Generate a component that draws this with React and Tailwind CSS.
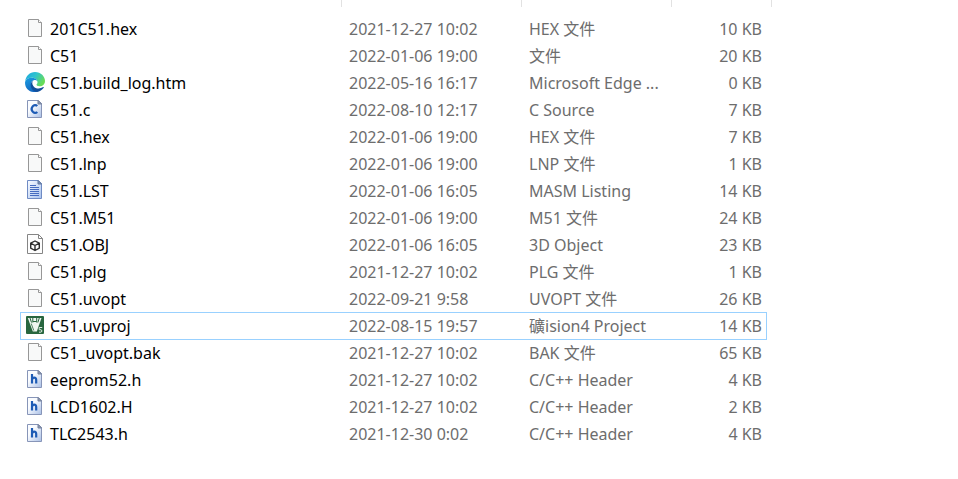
const files = [
  { name: '201C51.hex', date: '2021-12-27 10:02', type: 'HEX 文件', size: '10 KB', icon: 'blank' },
  { name: 'C51', date: '2022-01-06 19:00', type: '文件', size: '20 KB', icon: 'blank' },
  { name: 'C51.build_log.htm', date: '2022-05-16 16:17', type: 'Microsoft Edge ...', size: '0 KB', icon: 'edge' },
  { name: 'C51.c', date: '2022-08-10 12:17', type: 'C Source', size: '7 KB', icon: 'c' },
  { name: 'C51.hex', date: '2022-01-06 19:00', type: 'HEX 文件', size: '7 KB', icon: 'blank' },
  { name: 'C51.lnp', date: '2022-01-06 19:00', type: 'LNP 文件', size: '1 KB', icon: 'blank' },
  { name: 'C51.LST', date: '2022-01-06 16:05', type: 'MASM Listing', size: '14 KB', icon: 'listing' },
  { name: 'C51.M51', date: '2022-01-06 19:00', type: 'M51 文件', size: '24 KB', icon: 'blank' },
  { name: 'C51.OBJ', date: '2022-01-06 16:05', type: '3D Object', size: '23 KB', icon: 'object' },
  { name: 'C51.plg', date: '2021-12-27 10:02', type: 'PLG 文件', size: '1 KB', icon: 'blank' },
  { name: 'C51.uvopt', date: '2022-09-21 9:58', type: 'UVOPT 文件', size: '26 KB', icon: 'blank' },
  { name: 'C51.uvproj', date: '2022-08-15 19:57', type: '礦ision4 Project', size: '14 KB', icon: 'keil', focused: true },
  { name: 'C51_uvopt.bak', date: '2021-12-27 10:02', type: 'BAK 文件', size: '65 KB', icon: 'blank' },
  { name: 'eeprom52.h', date: '2021-12-27 10:02', type: 'C/C++ Header', size: '4 KB', icon: 'h' },
  { name: 'LCD1602.H', date: '2021-12-27 10:02', type: 'C/C++ Header', size: '2 KB', icon: 'h' },
  { name: 'TLC2543.h', date: '2021-12-30 0:02', type: 'C/C++ Header', size: '4 KB', icon: 'h' },
];

function BlankIcon() {
  return (
    <>
      <path d="M3.5 1.5h10l3 3v14h-13z" fill="#f8f9f9" stroke="#979797" />
      <path d="M13.5 1.5v3h3" fill="#fff" stroke="#979797" />
    </>
  );
}

function BluePage() {
  return (
    <>
      <defs>
        <linearGradient id="page" x1="0" y1="0" x2="1" y2="1">
          <stop offset="0.35" stopColor="#fafcff" />
          <stop offset="1" stopColor="#a9bfe6" />
        </linearGradient>
      </defs>
      <path d="M2.5 1.5h11l3 3v14h-14z" fill="url(#page)" stroke="#8795b8" />
      <path d="M13 1.5v3.5h3.5z" fill="#8e99b0" stroke="#75819c" />
    </>
  );
}

function CIcon() {
  return (
    <>
      <BluePage />
      <path d="M12.3 7A3.4 3.9 0 1 0 12.3 13" fill="none" stroke="#1d5bb5" strokeWidth="2.2" />
    </>
  );
}

function HIcon() {
  return (
    <>
      <BluePage />
      <path
        d="M7 5v9.5M7 11Q7.4 8.6 9.2 8.6 11.2 8.6 11.2 11V14.5"
        fill="none"
        stroke="#1d5bb5"
        strokeWidth="2.2"
      />
    </>
  );
}

function ListingIcon() {
  return (
    <>
      <defs>
        <linearGradient id="listing" x1="0" y1="0" x2="1" y2="1">
          <stop offset="0.1" stopColor="#f2f7ff" />
          <stop offset="1" stopColor="#a8c2ee" />
        </linearGradient>
      </defs>
      <path d="M2.5 .5h11l3 3v15h-14z" fill="url(#listing)" stroke="#6f8bc4" />
      <path d="M13 .5v3.5h3.5z" fill="#7d91b8" stroke="#62789f" />
      <path d="M5 5.5h6M5 7.5h9M5 9.5h9M5 11.5h9M5 13.5h9M5 15.5h9" stroke="#466cc0" />
    </>
  );
}

function ObjectIcon() {
  return (
    <>
      <path d="M2.5 .5h11l4 4v15h-15z" fill="#fdfdfd" stroke="#858585" />
      <path d="M13.5 .5v4h4" fill="none" stroke="#858585" />
      <path
        d="M10 7 14.3 9.2V14.2L10 16.5 5.7 14.2V9.2zM5.7 9.2l4.3 2.3 4.3-2.3M10 11.5v5"
        fill="none"
        stroke="#2d2d2d"
        strokeWidth="1.4"
        strokeLinejoin="round"
      />
    </>
  );
}

function EdgeIcon() {
  return (
    <>
      <defs>
        <linearGradient id="edge-top" x1="0" y1="0" x2="1" y2="0.5">
          <stop offset="0" stopColor="#1ba5df" />
          <stop offset="0.5" stopColor="#2fc3cf" />
          <stop offset="1" stopColor="#68dc58" />
        </linearGradient>
        <linearGradient id="edge-left" x1="0" y1="0" x2="0.4" y2="1">
          <stop offset="0" stopColor="#1b9de2" />
          <stop offset="1" stopColor="#1268c0" />
        </linearGradient>
      </defs>
      <path
        d="M.2 9.4C.7 4 4.8 0 10 0c6 0 10 4.6 10 9 0 3.3-2.5 5.3-5.3 5.3-2.2 0-3.5-.9-3.2-1.7.3-.6 1-1 1-2.4C12.5 7.5 9.7 5.8 6.7 5.8 3.5 5.8 1.1 7.3.2 9.4z"
        fill="url(#edge-top)"
      />
      <path
        d="M.1 9.8C.9 7.3 3.5 5.7 6.7 5.7c3 0 5.3 1.5 5.7 3.5-.7-.9-1.8-1.3-2.9-1.1C6.5 8.5 5.6 11.3 6.6 14c1 2.7 3.6 4.7 6.3 5.5C6.5 21.7-.7 17.3.1 9.8z"
        fill="url(#edge-left)"
      />
      <path
        d="M8.6 8.4c-1.7 1.2-1.7 3.5-.3 5.5 2.2 3.1 6.6 3.3 9.9 1.2.5-.2.8.1.5.6-1.5 2.2-4 4-6.6 4.2-3-.2-5.8-2.7-6.3-5.7-.5-2.7.7-4.9 2.8-5.8z"
        fill="#124e9b"
      />
    </>
  );
}

function KeilIcon() {
  return (
    <>
      <rect x="1" y="1" width="18" height="18" rx="1" fill="#27663f" />
      <path d="M2.8 3h13.7L11.8 16.5H7.8z" fill="#eef5f0" />
      <path d="M5 3l1.5 4.5M7.8 3v4.5M8 6.5h3.5M11.7 3v4.5M14.3 3l-1.5 4.5" fill="none" stroke="#27663f" />
      <path d="M6.2 8.5l2.600 7" stroke="#27663f" strokeWidth="0.8" />
      <path d="M17.2 12.5h-3v2.200q2.800-.4 2.800 1.300 0 1.600-3 1.200" fill="none" stroke="#dcebe1" />
    </>
  );
}

const iconMap = {
  blank: BlankIcon,
  c: CIcon,
  h: HIcon,
  listing: ListingIcon,
  object: ObjectIcon,
  edge: EdgeIcon,
  keil: KeilIcon,
};

function FileRow({ file }) {
  const Icon = iconMap[file.icon];

  return (
    <tr
      className={`h-[27px] align-top ${
        file.focused
          ? 'shadow-[0_-1px_0_0_#99d1ff,inset_1px_0_0_0_#99d1ff,inset_-1px_0_0_0_#99d1ff,inset_0_-1px_0_0_#99d1ff]'
          : ''
      }`}
    >
      <td className="p-0 pl-[5px] text-black">
        <div className="flex items-start gap-[5px]">
          <svg viewBox="0 0 20 20" className="mt-[2px] h-5 w-5 shrink-0" aria-hidden="true">
            <Icon />
          </svg>
          <span>{file.name}</span>
        </div>
      </td>
      <td className="p-0 pl-2">{file.date}</td>
      <td className="p-0 pl-2">{file.type}</td>
      <td className="p-0 pr-[5px] text-right">{file.size}</td>
    </tr>
  );
}

export default function App() {
  return (
    <main className="min-h-screen bg-white pl-5 font-['Noto_Sans','Noto_Sans_CJK_SC',sans-serif] text-[16px] leading-[27px] text-[#6d6d6d]">
      {/* Column dividers */}
      <div className="mb-[9px] flex h-[7px]">
        <div className="w-[322px] border-r border-[#e2e2e2]" />
        <div className="w-[180px] border-r border-[#e2e2e2]" />
        <div className="w-[150px] border-r border-[#e2e2e2]" />
        <div className="w-[100px] border-r border-[#e2e2e2]" />
      </div>

      <table aria-label="Files" className="table-fixed border-collapse whitespace-nowrap">
        <colgroup>
          <col className="w-[321px]" />
          <col className="w-[180px]" />
          <col className="w-[150px]" />
          <col className="w-[96px]" />
        </colgroup>
        <tbody>
          {files.map((file) => (
            <FileRow key={file.name} file={file} />
          ))}
        </tbody>
      </table>
    </main>
  );
}
